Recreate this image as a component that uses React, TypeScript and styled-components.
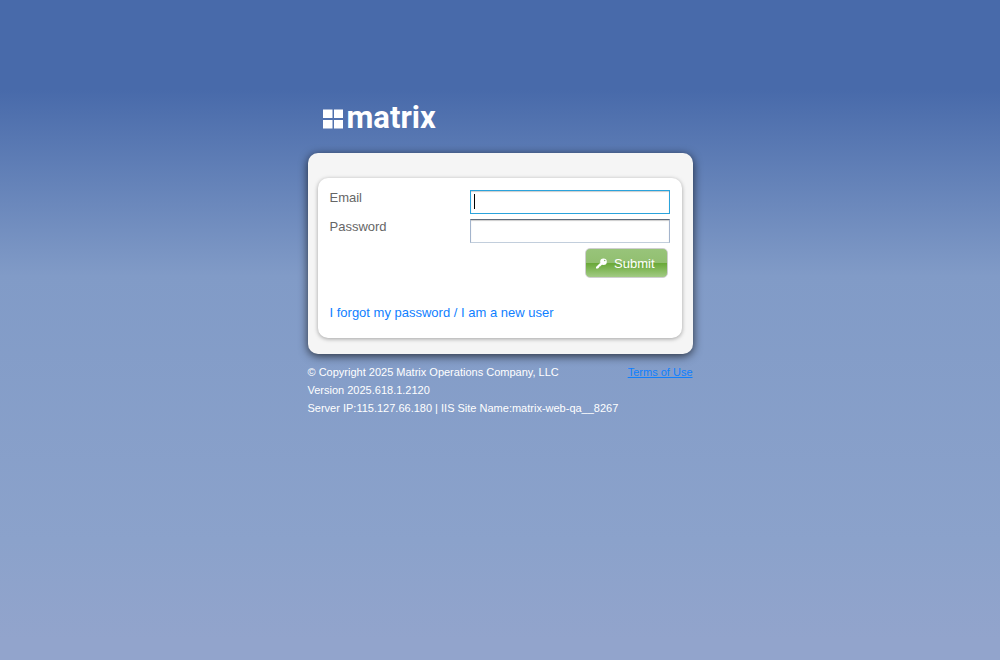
import React from "react";
import styled, { createGlobalStyle } from "styled-components";

const GlobalStyle = createGlobalStyle`
  *, *::before, *::after { box-sizing: border-box; }
  html { min-height: 100%; background: #93a4cc; }
  body {
    margin: 0;
    font-family: "Liberation Sans", Arial, sans-serif;
    font-size: 13px;
    color: #666;
  }
`;

const Page = styled.div`
  min-height: 100vh;
  padding: 96px 16px 32px;
  background: linear-gradient(#486aaa 0, #486aaa 90px, #819bc7 276px, #8ba2cb 540px, #92a4cc 640px);
`;

const Column = styled.main`
  width: 100%;
  max-width: 385px;
  margin: 0 auto;
`;

const Logo = styled.h1`
  display: flex;
  align-items: center;
  gap: 4px;
  height: 40px;
  margin: 0 0 17px;
  padding: 3px 0 0 15px;
  color: #fff;
  font: bold 31px/40px Roboto, "Liberation Sans", sans-serif;
`;

const LogoMark = styled.svg`
  width: 20px;
  height: 20px;
  margin-top: 3px;
  fill: #fff;
`;

const Frame = styled.section`
  padding: 25px 11px 16px 10px;
  border-radius: 10px;
  background: #f5f5f5;
  box-shadow: 0 2px 10px rgba(0, 0, 0, 0.7);
`;

const Card = styled.form`
  min-height: 160px;
  padding: 12px;
  border-radius: 10px;
  background: #fff;
  box-shadow: 0 1px 4px rgba(0, 0, 0, 0.35);
`;

const Field = styled.div`
  display: flex;
  justify-content: space-between;
  margin-bottom: 5px;
`;

const Label = styled.label`
  line-height: 15px;
`;

const TextBox = styled.input`
  width: 200px;
  height: 24px;
  padding: 2px 3px;
  border: 1px solid;
  border-color: #5f6b7a #a3b4cc #c2cedc #a3b4cc;
  border-radius: 0;
  outline: 0;
  background: #fff;
  box-shadow: inset 0 1px 1px #ccc;
  color: #000;
  caret-color: #000;
  font: 13px "Liberation Sans", Arial, sans-serif;

  &:focus {
    border-color: #2aa3dc;
  }

  &:focus:placeholder-shown {
    caret-color: transparent;
    background: #fff linear-gradient(#000, #000) 3px 3px / 1px 15px no-repeat;
  }
`;

const Actions = styled.div`
  display: flex;
  justify-content: flex-end;
  padding-right: 2px;
`;

const SubmitButton = styled.button`
  display: flex;
  align-items: center;
  gap: 7px;
  height: 30px;
  padding: 0 12px 0 10px;
  border: 1px solid #cfcfcf;
  border-radius: 5px;
  background: linear-gradient(#98c47a 0, #92bf70 50%, #68a836 50%, #a2cb84 100%);
  color: #fff;
  font: 13px "Liberation Sans", Arial, sans-serif;
`;

const KeyIcon = styled.svg`
  width: 11px;
  height: 11px;
`;

const Links = styled.p`
  margin: 27px 0 0;
  line-height: 15px;
`;

const Link = styled.a`
  color: #0f80ff;
  text-decoration: none;
`;

const Footer = styled.footer`
  display: flex;
  justify-content: space-between;
  align-items: flex-start;
  margin-top: 9px;
  color: #fff;
  font-size: 11px;
  line-height: 18px;
`;

const FooterLine = styled.div``;

const TermsLink = styled.a`
  color: #0f80ff;
`;

export default function App() {
  return (
    <>
      <GlobalStyle />
      <Page>
        <Column>
          <Logo>
            <LogoMark viewBox="0 0 20 20" aria-hidden="true">
              <path d="M0 0.500h9.500v8.500H0zM11 0.500h9v8.500h-9zM0 11h9.500v8.500H0zM11 11h9v8.500h-9z" />
            </LogoMark>
            matrix
          </Logo>
          <Frame>
            <Card onSubmit={(event) => event.preventDefault()}>
              <Field>
                <Label htmlFor="email">Email</Label>
                <TextBox id="email" type="text" placeholder=" " autoFocus />
              </Field>
              <Field>
                <Label htmlFor="password">Password</Label>
                <TextBox id="password" type="password" />
              </Field>
              <Actions>
                <SubmitButton type="submit">
                  <KeyIcon viewBox="0 0 11 11" aria-hidden="true">
                    <path d="M0 9L4.300 4.700L6.300 6.700L5 7.500L4.500 8.300L3.500 8.500L3 9.500L2 10.500L0 10.500Z" fill="#fff" />
                    <circle cx="7.500" cy="3.700" r="3.300" fill="#fff" />
                    <circle cx="8.700" cy="2.500" r="0.800" fill="#8dbb6b" />
                  </KeyIcon>
                  Submit
                </SubmitButton>
              </Actions>
              <Links>
                <Link href="#account">I forgot my password / I am a new user</Link>
              </Links>
            </Card>
          </Frame>
          <Footer>
            <div>
              <FooterLine>© Copyright 2025 Matrix Operations Company, LLC</FooterLine>
              <FooterLine>Version 2025.618.1.2120</FooterLine>
              <FooterLine>Server IP:115.127.66.180 | IIS Site Name:matrix-web-qa__8267</FooterLine>
            </div>
            <TermsLink href="#terms">Terms of Use</TermsLink>
          </Footer>
        </Column>
      </Page>
    </>
  );
}
